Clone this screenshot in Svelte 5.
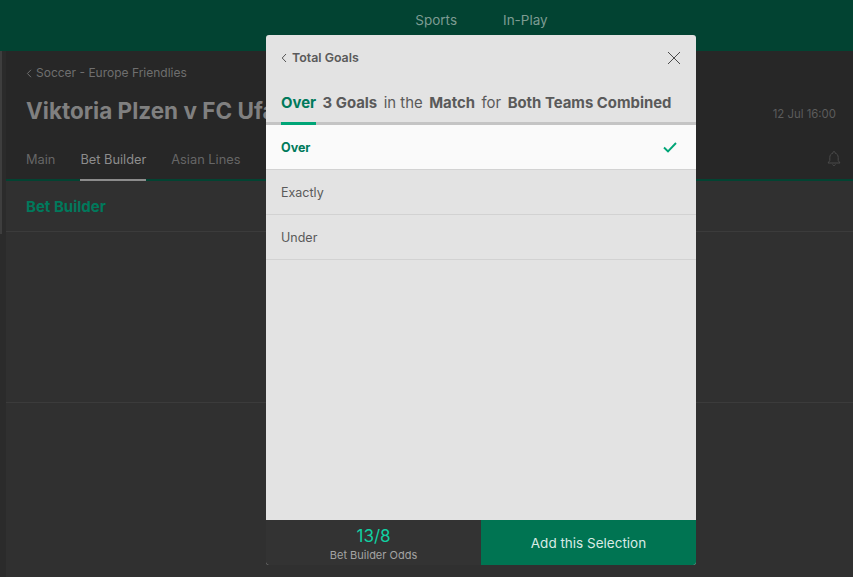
<script>
  const tabs = ["Main", "Bet Builder", "Asian Lines"];
  const options = ["Over", "Exactly", "Under"];
  let selected = $state("Over");
</script>

<div class="page">
  <header class="topbar">
    <nav class="topnav">
      <span>Sports</span>
      <span>In-Play</span>
    </nav>
  </header>

  <div class="body">
    <div class="rail"><div class="thumb"></div></div>
    <main class="content">
      <section class="match">
        <div class="crumb">
          <svg width="6" height="9" viewBox="0 0 6 9"><path d="M5 .8 1.4 4.5 5 8.2" fill="none" stroke="#6f6f6f" /></svg>
          <span>Soccer - Europe Friendlies</span>
        </div>
        <div class="titlerow">
          <h1>Viktoria Plzen v FC Ufa</h1>
          <span class="date">12 Jul 16:00</span>
        </div>
        <div class="tabs">
          {#each tabs as tab}
            <span class="tab" class:active={tab === "Bet Builder"}>{tab}</span>
          {/each}
          <svg class="bell" width="16" height="17" viewBox="0 0 16 17">
            <path d="M8 1.5c-.6 0-1 .4-1 1v.6C4.900 3.600 3.800 5.300 3.800 7.500v3L2 13h12l-1.800-2.500v-3c0-2.200-1.100-3.900-3.200-4.400v-.6c0-.6-.4-1-1-1Z" fill="none" stroke="#4a4a4a" />
            <path d="M6.500 14.500c.3.700.8 1 1.500 1s1.200-.3 1.500-1" fill="none" stroke="#4a4a4a" />
          </svg>
        </div>
      </section>
      <section class="builder">
        <h2>Bet Builder</h2>
      </section>
      <div class="empty"></div>
    </main>
  </div>

  <div class="modal">
    <div class="modalhead">
      <div class="back">
        <svg width="6" height="10" viewBox="0 0 6 10"><path d="M5 1 1.200 5 5 9" fill="none" stroke="#545454" /></svg>
        <span>Total Goals</span>
      </div>
      <svg class="close" width="14" height="14" viewBox="0 0 14 14"><path d="M1 1l12 12M13 1 1 13" fill="none" stroke="#4a4a4a" /></svg>
    </div>
    <div class="sentence">
      <b class="first">Over</b><b>3 Goals</b><span>in the</span><b>Match</b><span>for</span><b>Both Teams Combined</b>
    </div>
    <ul class="options">
      {#each options as opt}
        <li class:on={opt === selected}>
          <span>{opt}</span>
          {#if opt === selected}
            <svg width="14" height="11" viewBox="0 0 14 11"><path d="M1 5.500 5 9.500 13 1" fill="none" stroke="#00a577" stroke-width="1.900" /></svg>
          {/if}
        </li>
      {/each}
    </ul>
    <div class="modalfoot">
      <div class="odds">
        <div class="price">13/8</div>
        <div class="label">Bet Builder Odds</div>
      </div>
      <div class="add">Add this Selection</div>
    </div>
  </div>
</div>

<style>
  :global(body) {
    margin: 0;
    background: #303030;
  }
  .page {
    position: relative;
    width: 853px;
    height: 577px;
    overflow: hidden;
    display: flex;
    flex-direction: column;
    font-family: Inter, "Liberation Sans", sans-serif;
    background: #303030;
  }
  .topbar {
    height: 51px;
    flex: none;
    background: #024332;
    display: flex;
    justify-content: center;
    padding-left: 110px;
  }
  .topnav {
    display: flex;
    gap: 46px;
    padding-top: 13px;
    font-size: 13.500px;
    line-height: 15px;
    color: #7d9c92;
  }
  .body {
    flex: 1;
    display: flex;
  }
  .rail {
    width: 6px;
    flex: none;
    background: #2b2b2b;
  }
  .thumb {
    width: 2px;
    height: 183px;
    background: #3e3e3e;
  }
  .content {
    flex: 1;
    display: flex;
    flex-direction: column;
  }
  .match {
    background: #272727;
    height: 130px;
    box-sizing: border-box;
    padding: 15px 0 0 20px;
    border-bottom: 2px solid #024332;
    display: flex;
    flex-direction: column;
  }
  .crumb {
    display: flex;
    align-items: center;
    gap: 4px;
    font-size: 12px;
    line-height: 14px;
    color: #6f6f6f;
  }
  .titlerow {
    display: flex;
    justify-content: space-between;
    align-items: center;
    margin-top: 17px;
    padding-right: 17px;
  }
  h1 {
    margin: 0;
    font-size: 22.500px;
    line-height: 28px;
    font-weight: 700;
    color: #808080;
  }
  .date {
    font-size: 11.400px;
    color: #5c5c5c;
    padding-top: 6px;
  }
  .tabs {
    display: flex;
    gap: 25px;
    margin-top: auto;
    padding-right: 11px;
    font-size: 12.800px;
    color: #666;
  }
  .tab {
    height: 29px;
    line-height: 15px;
    box-sizing: border-box;
    margin-bottom: -2px;
  }
  .tab.active {
    color: #8d8d8d;
    border-bottom: 2px solid #8c8c8c;
  }
  .bell {
    margin-left: auto;
    margin-top: -2px;
  }
  .builder {
    height: 51px;
    box-sizing: border-box;
    padding: 0 0 0 20px;
    border-bottom: 1px solid #3b3b3b;
    display: flex;
    align-items: center;
  }
  h2 {
    margin: 0;
    font-size: 15px;
    font-weight: 700;
    color: #00795c;
  }
  .empty {
    height: 170px;
    border-bottom: 1px solid #3b3b3b;
  }
  .modal {
    position: absolute;
    left: 266px;
    top: 35px;
    width: 430px;
    height: 530px;
    border-radius: 3px;
    overflow: hidden;
    background: #e3e3e3;
    display: flex;
    flex-direction: column;
    color: #5a5a5a;
  }
  .modalhead {
    height: 45px;
    flex: none;
    display: flex;
    align-items: center;
    justify-content: space-between;
    padding: 0 15px;
  }
  .back {
    display: flex;
    align-items: center;
    gap: 5px;
    font-size: 12.400px;
    font-weight: 600;
  }
  .sentence {
    height: 45px;
    flex: none;
    box-sizing: border-box;
    display: flex;
    gap: 6.500px;
    padding: 14px 15px 0;
    border-bottom: 3px solid #c4c4c4;
    position: relative;
    font-size: 14.900px;
    line-height: 18px;
    white-space: nowrap;
  }
  .sentence b {
    font-weight: 700;
  }
  .first {
    color: #007a5c;
  }
  .first::after {
    content: "";
    position: absolute;
    left: 15px;
    bottom: -3px;
    width: 35px;
    height: 3px;
    background: #00a577;
  }
  .options {
    list-style: none;
    margin: 0;
    padding: 0;
    flex: 1;
    font-size: 12.500px;
  }
  li {
    height: 45px;
    box-sizing: border-box;
    padding: 0 19px 0 15px;
    border-bottom: 1px solid #d2d2d2;
    display: flex;
    align-items: center;
    justify-content: space-between;
  }
  li.on {
    background: #fafafa;
    color: #007a5c;
    font-weight: 700;
  }
  .modalfoot {
    height: 45px;
    flex: none;
    display: flex;
  }
  .odds {
    width: 215px;
    background: #333;
    text-align: center;
  }
  .price {
    font-size: 17px;
    line-height: 20px;
    padding-top: 6px;
    color: #10d0a2;
  }
  .label {
    font-size: 11px;
    line-height: 14px;
    margin-top: 2px;
    color: #a3a3a3;
  }
  .add {
    flex: 1;
    background: #007452;
    color: #d9ebe5;
    font-size: 13.500px;
    padding-top: 1px;
    display: flex;
    align-items: center;
    justify-content: center;
  }
</style>
